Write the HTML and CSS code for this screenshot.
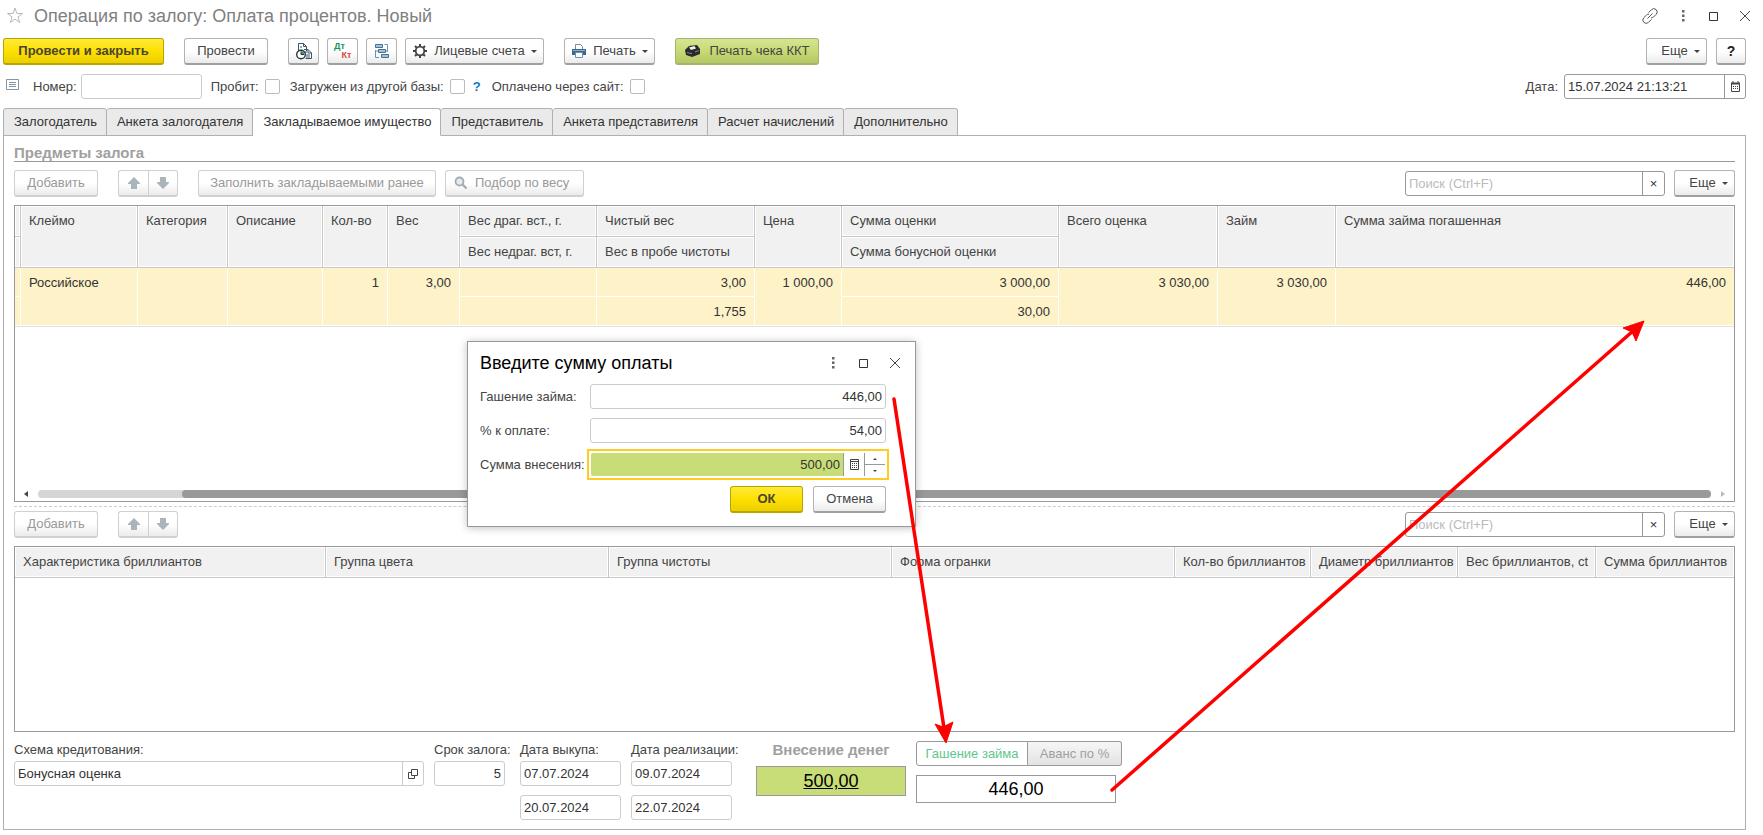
FILE: index.html
```html
<!DOCTYPE html>
<html lang="ru">
<head>
<meta charset="utf-8">
<title>Операция по залогу: Оплата процентов. Новый</title>
<link rel="stylesheet" href="styles.css">
</head>
<body>
<svg class="defs" aria-hidden="true">
  <symbol id="up" viewBox="0 0 12 12"><path d="M6 0 12 6v1H9v5H3V7H0V6z"/></symbol>
  <symbol id="down" viewBox="0 0 12 12"><path d="M6 12 0 6V5h3V0h6v5h3v1z"/></symbol>
  <symbol id="dots" viewBox="0 0 12 12"><path d="M5 0h2.500v2.500H5zM5 4.500h2.500V7H5zM5 9h2.500v2.500H5z"/></symbol>
  <symbol id="square" viewBox="0 0 12 12"><path d="M1.500 2.500h8v8h-8z" fill="none" stroke="#333"/></symbol>
  <symbol id="cross" viewBox="0 0 12 12"><path d="M1 1l10 10M11 1 1 11" fill="none" stroke="#444"/></symbol>
</svg>

<header class="titlebar">
  <button class="plain" aria-label="В избранное"><svg width="18" height="17" viewBox="0 0 18 17"><path d="M9 1l1.900 5.500h5.600l-4.500 3.400 1.700 5.600L9 12.200l-4.700 3.300L6 9.900 1.500 6.500h5.600z" fill="none" stroke="#b5bac0"/></svg></button>
  <h1>Операция по залогу: Оплата процентов. Новый</h1>
  <div class="win">
    <button class="plain" aria-label="Ссылка"><svg width="16" height="16" viewBox="0 0 16 16" fill="none" stroke="#555"><path d="M6.500 4.500 9.500 1.700a3.200 3.200 0 0 1 4.700 4.600L11.500 9a3 3 0 0 1-2.500.8M9.500 11.500 6.500 14.300A3.200 3.200 0 0 1 1.800 9.700L4.500 7A3 3 0 0 1 7 6.200M5.500 10.500l5-5"/></svg></button>
    <button class="plain" aria-label="Меню"><svg width="12" height="12" fill="#666"><use href="#dots"/></svg></button>
    <button class="plain" aria-label="Развернуть"><svg width="12" height="12"><use href="#square"/></svg></button>
    <button class="plain" aria-label="Закрыть"><svg width="12" height="12"><use href="#cross"/></svg></button>
  </div>
</header>

<div class="commands">
  <button class="btn primary wide-main">Провести и закрыть</button>
  <button class="btn post">Провести</button>
  <div class="icons">
    <button class="btn icon" aria-label="Движения документа"><svg width="18" height="18" viewBox="0 0 18 18"><path d="M3.500 9V1.500h5l3 3V9M8.500 1.500v3h3M5 5h2M9 7.500h4l3.500 3.500v5.500h-6M13 7.500V11h3.500M11 13h4M11 15h4M10 10h2" fill="#fff" stroke="#3f5566"/><circle cx="6" cy="12.500" r="4.300" fill="#fff" stroke="#263640" stroke-width="1.400"/><path d="M6 12.500V9.200a3.300 3.300 0 0 1 3.300 3.300z" fill="#37a04a"/><path d="M6 9.500v3h3" fill="none" stroke="#263640"/></svg></button>
    <button class="btn icon dtkt" aria-label="Дт Кт"><span class="dt">Дт</span><span class="kt">Кт</span></button>
    <button class="btn icon" aria-label="Структура подчиненности"><svg width="16" height="16" viewBox="0 0 16 16"><path d="M1.500 1.500h7v3h-7zM4.500 6.500h7v3h-7zM7.500 11.500h7v3h-7z" fill="#9fc3df" stroke="#47718f"/><path d="M10.500 1.500h3V9M1.500 7v7.500H5M2 8h2M13.500 8H12" fill="none" stroke="#6b93b0"/></svg></button>
  </div>
  <button class="btn accounts"><svg width="16" height="16" viewBox="0 0 16 16"><circle cx="8" cy="8" r="4.300" fill="none" stroke="#444" stroke-width="1.800"/><path d="M8 1v2.500M8 12.500V15M1 8h2.500M12.500 8H15M3 3l1.800 1.800M11.200 11.200 13 13M13 3l-1.800 1.800M4.800 11.200 3 13" stroke="#444" stroke-width="2"/></svg>Лицевые счета<i class="caret"></i></button>
  <button class="btn print"><svg width="16" height="16" viewBox="0 0 16 16"><path d="M4.500 6V1.500h5l2 2V6" fill="#fff" stroke="#6f8fa8"/><path d="M1 6h14v6H1z" fill="#3c678c"/><path d="M2 7.500h12" stroke="#8db2d0"/><path d="M4.500 9.500h7v5h-7z" fill="#fff" stroke="#6f8fa8"/></svg>Печать<i class="caret"></i></button>
  <button class="btn receipt"><svg width="18" height="14" viewBox="0 0 18 14"><path d="M1 6 5 2l8-1 3 4v5l-8 3-6-2z" fill="#2a2a2a"/><path d="M5 3.500 10.500 2l1.500 2.500-5 1.500z" fill="#eee"/><path d="M3 8.500l5 1.200M11 8l4-1.500" stroke="#888"/></svg>Печать чека ККТ</button>
  <div class="end">
    <button class="btn more">Еще<i class="caret"></i></button>
    <button class="btn icon help">?</button>
  </div>
</div>

<div class="fields">
  <svg class="form-ico" width="13" height="11" viewBox="0 0 13 11"><path d="M.5.5h12v10H.5z" fill="#fff" stroke="#8495a4"/><path d="M3 3.500h7M3 5.500h7M3 7.500h7" stroke="#8495a4"/></svg>
  <label for="num">Номер:</label><input id="num" class="box num" type="text">
  <label for="c1">Пробит:</label><input id="c1" type="checkbox">
  <label for="c2">Загружен из другой базы:</label><input id="c2" type="checkbox">
  <a href="#" class="hint">?</a>
  <label for="c3">Оплачено через сайт:</label><input id="c3" type="checkbox">
  <div class="end date-field">
    <label for="date">Дата:</label>
    <div class="combo dark date"><input id="date" type="text" value="15.07.2024 21:13:21"><button aria-label="Календарь"><svg width="11" height="11" viewBox="0 0 11 11"><path d="M1.500 2.500h8v8h-8z" fill="none" stroke="#444"/><path d="M1 1.500h9v2H1zM2.500 0h1v2h-1zM7.500 0h1v2h-1z" fill="#444"/><path d="M3 5.500h5.500M3 7.500h5.500" stroke="#444" stroke-dasharray="1 1"/></svg></button></div>
  </div>
</div>

<nav class="tabs">
  <button>Залогодатель</button><button>Анкета залогодателя</button><button class="active">Закладываемое имущество</button><button>Представитель</button><button>Анкета представителя</button><button>Расчет начислений</button><button>Дополнительно</button>
</nav>

<main class="panel">
  <h2 class="group">Предметы залога</h2>
  <div class="tools">
    <button class="btn add" disabled>Добавить</button>
    <div class="pair"><button class="btn" disabled aria-label="Вверх"><svg width="12" height="12"><use href="#up"/></svg></button><button class="btn" disabled aria-label="Вниз"><svg width="12" height="12"><use href="#down"/></svg></button></div>
    <button class="btn fill" disabled>Заполнить закладываемыми ранее</button>
    <button class="btn pick" disabled><svg width="14" height="14" viewBox="0 0 14 14"><circle cx="5.500" cy="5.500" r="4" fill="#e4eaee" stroke="#a3adb5" stroke-width="1.800"/><path d="M8.500 8.500 12.500 12.500" stroke="#a3adb5" stroke-width="2.400"/></svg>Подбор по весу</button>
    <div class="end"><div class="combo dark search"><input type="text" placeholder="Поиск (Ctrl+F)" aria-label="Поиск"><button aria-label="Очистить">×</button></div><button class="btn more">Еще<i class="caret"></i></button></div>
  </div>

  <div class="grid items">
    <table>
      <colgroup><col class="w6"><col class="w117"><col class="w90"><col class="w95"><col class="w65"><col class="w72"><col class="w137"><col class="w158"><col class="w87"><col class="w217"><col class="w159"><col class="w118"><col></colgroup>
      <thead>
        <tr><th></th><th rowspan="2">Клеймо</th><th rowspan="2">Категория</th><th rowspan="2">Описание</th><th rowspan="2">Кол-во</th><th rowspan="2">Вес</th><th>Вес драг. вст., г.</th><th>Чистый вес</th><th rowspan="2">Цена</th><th>Сумма оценки</th><th rowspan="2">Всего оценка</th><th rowspan="2">Займ</th><th rowspan="2">Сумма займа погашенная</th></tr>
        <tr><th></th><th>Вес недраг. вст, г.</th><th>Вес в пробе чистоты</th><th>Сумма бонусной оценки</th></tr>
      </thead>
      <tbody>
        <tr><td></td><td rowspan="2" class="txt">Российское</td><td rowspan="2"></td><td rowspan="2"></td><td rowspan="2">1</td><td rowspan="2">3,00</td><td></td><td>3,00</td><td rowspan="2">1 000,00</td><td>3 000,00</td><td rowspan="2">3 030,00</td><td rowspan="2">3 030,00</td><td rowspan="2">446,00</td></tr>
        <tr><td></td><td></td><td>1,755</td><td>30,00</td></tr>
      </tbody>
    </table>
    <div class="scroll"><i class="left"></i><div class="track"><div class="thumb"></div></div><i class="right"></i></div>
  </div>

  <hr class="split">
  <div class="tools second">
    <button class="btn add" disabled>Добавить</button>
    <div class="pair"><button class="btn" disabled aria-label="Вверх"><svg width="12" height="12"><use href="#up"/></svg></button><button class="btn" disabled aria-label="Вниз"><svg width="12" height="12"><use href="#down"/></svg></button></div>
    <div class="end"><div class="combo dark search"><input type="text" placeholder="Поиск (Ctrl+F)" aria-label="Поиск"><button aria-label="Очистить">×</button></div><button class="btn more">Еще<i class="caret"></i></button></div>
  </div>

  <div class="grid stones">
    <table>
      <colgroup><col><col class="w283"><col class="w283"><col class="w283"><col class="w136"><col class="w147"><col class="w138"><col class="w138"></colgroup>
      <thead><tr><th>Характеристика бриллиантов</th><th>Группа цвета</th><th>Группа чистоты</th><th>Форма огранки</th><th>Кол-во бриллиантов</th><th>Диаметр бриллиантов</th><th>Вес бриллиантов, ct</th><th>Сумма бриллиантов</th></tr></thead>
    </table>
  </div>

  <div class="footer">
    <div class="col scheme"><label for="scheme">Схема кредитования:</label><div class="combo"><input id="scheme" type="text" value="Бонусная оценка"><button aria-label="Открыть"><svg width="10" height="10" viewBox="0 0 10 10" fill="none" stroke="#444"><path d="M3.500.5h6v6h-6zM3.500 3.500h-3v6h6v-3"/></svg></button></div></div>
    <div class="col term"><label for="term">Срок залога:</label><input id="term" class="box num-r" type="text" value="5"></div>
    <div class="col dates"><label for="d1">Дата выкупа:</label><input id="d1" class="box" type="text" value="07.07.2024"><input class="box" type="text" value="20.07.2024" aria-label="Дата выкупа, льготная"></div>
    <div class="col dates last"><label for="d2">Дата реализации:</label><input id="d2" class="box" type="text" value="09.07.2024"><input class="box" type="text" value="22.07.2024" aria-label="Дата реализации, льготная"></div>
    <div class="col cash"><h2>Внесение денег</h2><button class="sum green">500,00</button></div>
    <div class="col target"><div class="switch"><button class="on">Гашение займа</button><button>Аванс по %</button></div><output class="sum">446,00</output></div>
  </div>
</main>

<section class="dialog" role="dialog" aria-labelledby="dlg">
  <div class="dlg-head"><h2 id="dlg">Введите сумму оплаты</h2>
    <div class="win"><button class="plain" aria-label="Меню"><svg width="12" height="12" fill="#666"><use href="#dots"/></svg></button><button class="plain" aria-label="Развернуть"><svg width="12" height="12"><use href="#square"/></svg></button><button class="plain" aria-label="Закрыть"><svg width="12" height="12"><use href="#cross"/></svg></button></div>
  </div>
  <div class="dlg-row"><label for="f1">Гашение займа:</label><input id="f1" class="box num-r" type="text" value="446,00"></div>
  <div class="dlg-row"><label for="f2">% к оплате:</label><input id="f2" class="box num-r" type="text" value="54,00"></div>
  <div class="dlg-row"><label for="f3">Сумма внесения:</label>
    <div class="combo focus"><input id="f3" class="num-r" type="text" value="500,00"><button aria-label="Калькулятор"><svg width="9" height="11" viewBox="0 0 9 11"><path d="M.5.5h8v10h-8z" fill="none" stroke="#444"/><path d="M1 2.500h7" stroke="#444"/><path d="M2 4.500h5.500M2 6.500h5.500M2 8.500h5.500" stroke="#444" stroke-dasharray="1 1"/></svg></button><div class="spin"><button aria-label="Больше"><i class="inc"></i></button><button aria-label="Меньше"><i class="dec"></i></button></div></div>
  </div>
  <div class="dlg-btns"><button class="btn primary">ОК</button><button class="btn">Отмена</button></div>
</section>

<svg class="arrows" width="1763" height="835" viewBox="0 0 1763 835" aria-hidden="true">
  <path d="M894 399 944 728M1112 790 1633 331" fill="none" stroke="#f00" stroke-width="3.500" stroke-linecap="round"/>
  <path d="M946 743 935 724 943 727 953 722zM1644 321 1636 341 1632 332 1623 328z" fill="#f00" stroke="#f00"/>
</svg>
</body>
</html>
```
FILE: styles.css
```css
* { box-sizing: border-box; }
body {
  margin: 0;
  min-height: 100vh;
  padding: 0 17px 5px 3px;
  display: flex;
  flex-direction: column;
  position: relative;
  background: #fff;
  color: #444;
  font: 13px/16px "Liberation Sans", Arial, sans-serif;
}
button, input { font: inherit; color: #333; margin: 0; }
h1, h2 { margin: 0; font-weight: normal; }
.defs { position: absolute; width: 0; height: 0; }
svg { flex: none; }
.end { margin-left: auto; display: flex; align-items: center; gap: 9px; }

.plain { border: 0; padding: 0; background: none; display: flex; }
.win { margin-left: auto; display: flex; align-items: center; gap: 19px; }
.titlebar { display: flex; align-items: center; height: 31px; padding-left: 3px; gap: 10px; margin-right: -5px; }
.titlebar h1 { font-size: 18px; line-height: 24px; color: #7f7f7f; }

.btn {
  height: 27px;
  padding: 0 8px;
  display: flex;
  align-items: center;
  justify-content: center;
  border: 1px solid #b3b3b3;
  border-bottom: 2px solid #a0a0a0;
  border-radius: 3px;
  background: linear-gradient(#fff 50%, #ebebeb);
  color: #444;
  white-space: nowrap;
}
.btn:disabled { color: #999; border-color: #d0d0d0; fill: #a9b4bb; }
.primary { background: linear-gradient(#ffea3a, #fde000 50%, #eccf00); border-color: #b9a400; font-weight: bold; color: #4a4433; }
.caret { border: 3px solid transparent; border-top-color: #444; border-bottom: 0; margin-left: 6px; }
.commands { display: flex; height: 34px; padding-top: 7px; align-items: center; }
.wide-main { width: 161px; }
.post { width: 84px; margin: 0 20px; }
.icons { display: flex; gap: 8px; }
.icon { width: 31px; padding: 0; }
.accounts { width: 139px; margin: 0 20px 0 8px; gap: 6px; padding: 0; }
.accounts .caret, .print .caret { margin-left: 0; }
.print { width: 91px; gap: 6px; padding: 0; margin-right: 20px; }
.receipt { width: 144px; gap: 7px; padding: 0; border-color: #a3b56c; background: linear-gradient(#d6e495, #c6da74 50%, #b5c766); }
.more { width: 61px; padding: 0 0 0 8px; }
.help { width: 30px; font-weight: bold; font-size: 14px; color: #222; }
.dtkt { flex-direction: column; font: bold 9px/9px "Liberation Sans", Arial, sans-serif; }
.dt { color: #159a4f; margin-right: 6px; }
.kt { color: #e04545; margin-left: 8px; }

.box, .combo {
  height: 25px;
  border: 1px solid #ccc;
  border-radius: 3px;
  background: #fff;
  padding: 0 3px;
  min-width: 0;
}
.combo { display: flex; padding: 0; }
.combo input { flex: 1; min-width: 0; border: 0; padding: 0 3px; background: none; }
.combo > button { width: 21px; border: 0; border-left: 1px solid #ccc; background: none; padding: 0; display: flex; align-items: center; justify-content: center; }
.dark, .dark > button { border-color: #999; }
.num-r { text-align: right; }
input::placeholder { color: #bbb; opacity: 1; }
input[type="checkbox"] { appearance: none; width: 15px; height: 15px; border: 1px solid #bbb; border-radius: 2px; background: #fff; }

.fields { display: flex; align-items: center; height: 25px; margin: 9px 0 9px 3px; }
.form-ico { margin: 0 14px 5px 0; }
.num { width: 121px; margin: 0 9px 0 4px; }
.fields input[type="checkbox"] { margin: 0 10px 0 6px; }
.hint { color: #0a7ac4; text-decoration: none; font-weight: bold; margin: 0 11px 0 -2px; }
.date-field { gap: 6px; }
.date { width: 182px; }

.tabs { display: flex; margin-bottom: -1px; position: relative; }
.tabs button { height: 28px; padding: 0 9px 0 10px; border: 1px solid #b0b0b0; border-left-width: 0; background: #eaeaea; border-radius: 3px 3px 0 0; white-space: nowrap; }
.tabs button:first-child { border-left-width: 1px; }
.tabs .active { background: #fff; border-bottom-color: #fff; }

.panel { flex: 1; border: 1px solid #b0b0b0; padding: 9px 10px 9px; display: flex; flex-direction: column; }
.group { font-size: 15px; line-height: 16px; font-weight: bold; color: #a0a0a0; border-bottom: 1px solid #999; height: 17px; }
.tools { display: flex; align-items: center; margin: 8px 0; }
.add { width: 84px; margin-right: 20px; }
.pair { display: flex; margin-right: 20px; }
.pair .btn { width: 30px; }
.pair .btn:first-child { border-radius: 3px 0 0 3px; border-right-width: 0; }
.pair .btn:last-child { border-radius: 0 3px 3px 0; }
.fill { width: 238px; margin-right: 9px; }
.pick { width: 139px; gap: 7px; justify-content: flex-start; }
.search { width: 260px; }
.search > button { width: 22px; }

.grid { border: 1px solid #999; display: flex; flex-direction: column; overflow: hidden; }
.items { min-height: 297px; }
.stones { flex: 1; min-height: 100px; }
table { border-collapse: separate; border-spacing: 0; table-layout: fixed; width: 100%; }
th, td { padding: 7px 2px 0 8px; vertical-align: top; text-align: left; font-weight: normal; white-space: nowrap; overflow: hidden; }
th { height: 31px; background: #f1f1f1; border: solid #c8c8c8; border-width: 0 1px 1px 0; box-shadow: inset 0 0 0 1px #fff; }
td { height: 29px; padding-right: 8px; background: #fdf2c8; border: solid #fff; border-width: 0 1px 1px 0; text-align: right; color: #333; }
.w6 + .w117 { width: 117px; }
th:first-child:empty, td:first-child:empty { padding: 0; }
tr > :last-child:not(:nth-child(4)) { border-right: 0; }
tbody { box-shadow: 0 1px #dfdfdf; }
td.txt { text-align: left; }
.w6 { width: 6px; } .w65 { width: 65px; } .w72 { width: 72px; } .w87 { width: 87px; }
.w90 { width: 90px; } .w95 { width: 95px; } .w117 { width: 117px; } .w118 { width: 118px; }
.w136 { width: 136px; } .w137 { width: 137px; } .w138 { width: 138px; } .w147 { width: 147px; }
.w158 { width: 158px; } .w159 { width: 159px; } .w217 { width: 217px; } .w283 { width: 283px; }
.scroll { margin-top: auto; height: 12px; padding: 0 9px 2px; display: flex; align-items: center; gap: 10px; }
.track { flex: 1; height: 8px; border-radius: 4px; background: #d5d5d5; }
.thumb { height: 8px; margin-left: 144px; border-radius: 4px; background: #999; }
.left { border: 3px solid transparent; border-right: 4px solid #444; border-left: 0; }
.right { border: 3px solid transparent; border-left: 4px solid #bbb; border-right: 0; }
.split { width: 100%; margin: 4px 0 0; border: 0; border-top: 1px dashed #ccc; }
.second { margin-top: 4px; }

.footer { display: flex; padding-top: 10px; align-items: flex-start; }
.col { display: flex; flex-direction: column; }
.col label { height: 19px; white-space: nowrap; }
.scheme { width: 410px; margin-right: 10px; }
.term { width: 71px; margin-right: 15px; }
.dates { width: 101px; margin-right: 10px; gap: 9px; }
.dates label { margin-bottom: -9px; }
.last { margin-right: 24px; }
.cash { width: 150px; margin-right: 10px; }
.cash h2 { font-size: 15px; font-weight: bold; color: #a0a0a0; text-align: center; height: 24px; }
.sum { height: 30px; border: 1px solid #999; background: #fff; padding: 0; color: #000; font-size: 18px; display: flex; align-items: center; justify-content: center; }
.green { background: #c8dc78; text-decoration: underline; }
.target { gap: 9px; margin-top: -1px; }
.target .sum { width: 200px; height: 28px; }
.switch { display: flex; }
.switch button { height: 25px; width: 94px; border: 1px solid #999; border-left: 0; border-radius: 0 3px 3px 0; background: linear-gradient(#f6f6f6, #e3e3e3); color: #a0a0a0; padding: 0; }
.switch .on { width: 112px; border-left: 1px solid #999; border-radius: 3px 0 0 3px; background: #fff; color: #5fc78e; }

.dialog { position: absolute; left: 467px; top: 341px; width: 449px; padding: 8px 29px 13px 12px; background: #fff; border: 1px solid #999; box-shadow: 0 1px 8px rgba(0, 0, 0, .25); display: flex; flex-direction: column; gap: 9px; }
.dlg-head { display: flex; align-items: center; height: 25px; margin-right: -15px; }
.dlg-head h2 { font-size: 18px; line-height: 24px; color: #000; }
.dlg-row { display: flex; align-items: center; }
.dlg-row label { width: 110px; white-space: nowrap; }
.dlg-row .box { flex: 1; }
.focus { flex: 1; height: 25px; border: 1px solid #fff; border-radius: 0; outline: 2px solid #fc2; outline-offset: 1px; }
.focus input { background: #c8dc78; border-radius: 2px 0 0 2px; }
.focus > button { border-color: #999; }
.spin { width: 21px; border-left: 1px solid #999; display: flex; flex-direction: column; }
.spin button { flex: 1; border: 0; padding: 0; background: none; display: flex; align-items: center; justify-content: center; }
.spin button + button { border-top: 1px solid #999; }
.inc, .dec { border: 2px solid transparent; }
.inc { border-bottom-color: #444; border-top: 0; }
.dec { border-top-color: #444; border-bottom: 0; }
.dlg-btns { display: flex; justify-content: flex-end; gap: 10px; }
.dlg-btns .btn { width: 73px; }
.arrows { position: absolute; left: 0; top: 0; pointer-events: none; }
```
